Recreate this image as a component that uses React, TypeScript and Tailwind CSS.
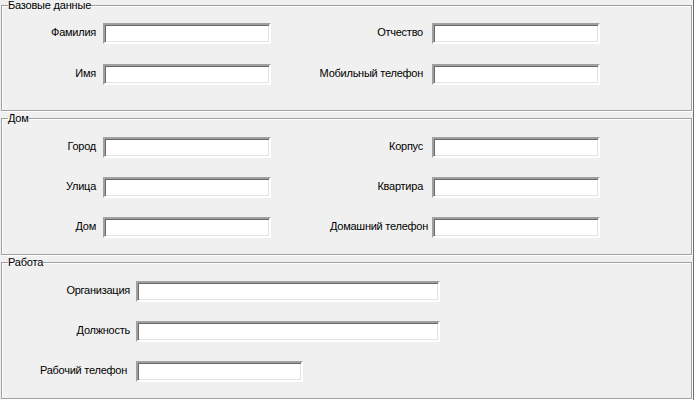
import React from "react";

const font = { fontFamily: '"Liberation Sans", Arial, sans-serif' };

function TextBox({ w }: { w: string }) {
  return (
    <input
      type="text"
      className={`${w} h-[21px] bg-white border-2 border-t-[#a0a0a0] border-l-[#a0a0a0] border-b-white border-r-white shadow-[inset_1px_1px_0_#696969,inset_-1px_-1px_0_#e3e3e3] outline-none text-[11px] px-1`}
    />
  );
}

function Group({
  title,
  className,
  children,
}: {
  title: string;
  className: string;
  children: React.ReactNode;
}) {
  return (
    <fieldset
      className={`${className} w-[691px] border border-[#a0a0a0] shadow-[1px_1px_0_#ffffff,inset_1px_1px_0_#ffffff] pt-[13px]`}
    >
      <legend className="ml-[6px] text-[11px] leading-[11px] text-black tracking-[-0.2px]">
        {title}
      </legend>
      {children}
    </fieldset>
  );
}

function TwoColRow({
  left,
  right,
  wide = false,
}: {
  left: string;
  right: string;
  wide?: boolean;
}) {
  return (
    <div className="flex items-center h-[21px] text-[11px] text-black tracking-[-0.25px]">
      <div className="w-[94px] text-right pb-[3px]">{left}</div>
      <div className="ml-[7px]">
        <TextBox w="w-[168px]" />
      </div>
      {wide ? (
        <>
          <div className="w-[157px] text-right pb-[3px] whitespace-nowrap">{right}</div>
          <div className="ml-[4px]">
            <TextBox w="w-[168px]" />
          </div>
        </>
      ) : (
        <>
          <div className="w-[152px] text-right pb-[3px] whitespace-nowrap">{right}</div>
          <div className="ml-[9px]">
            <TextBox w="w-[168px]" />
          </div>
        </>
      )}
    </div>
  );
}

function WorkRow({ label, w, labelClass = "" }: { label: string; w: string; labelClass?: string }) {
  return (
    <div className="flex items-center h-[21px] text-[11px] text-black tracking-[-0.25px]">
      <div className={`w-[128px] text-right pb-[3px] ${labelClass}`}>{label}</div>
      <div className="ml-[6px]">
        <TextBox w={w} />
      </div>
    </div>
  );
}

export default function App() {
  return (
    <div
      className="w-[694px] h-[400px] bg-[#f0f0f0] border-r border-[#6d6d6d] overflow-hidden"
      style={font}
    >
      <div className="flex flex-col pl-[1px]">
        {/* Базовые данные */}
        <Group title="Базовые данные" className="h-[111px]">
          <div className="flex flex-col gap-[20px] -mt-[1px]">
            <TwoColRow left="Фамилия" right="Отчество" />
            <TwoColRow left="Имя" right="Мобильный телефон" />
          </div>
        </Group>

        {/* Дом */}
        <Group title="Дом" className="h-[142px] mt-[2px]">
          <div className="flex flex-col gap-[19px]">
            <TwoColRow left="Город" right="Корпус" />
            <TwoColRow left="Улица" right="Квартира" />
            <TwoColRow left="Дом" right="Домашний телефон" wide />
          </div>
        </Group>

        {/* Работа */}
        <Group title="Работа" className="h-[142px] mt-[2px]">
          <div className="flex flex-col gap-[19px]">
            <WorkRow label="Организация" w="w-[304px]" />
            <WorkRow label="Должность" w="w-[304px]" />
            <WorkRow label="Рабочий телефон" w="w-[167px]" labelClass="pr-[3px]" />
          </div>
        </Group>
      </div>
    </div>
  );
}
